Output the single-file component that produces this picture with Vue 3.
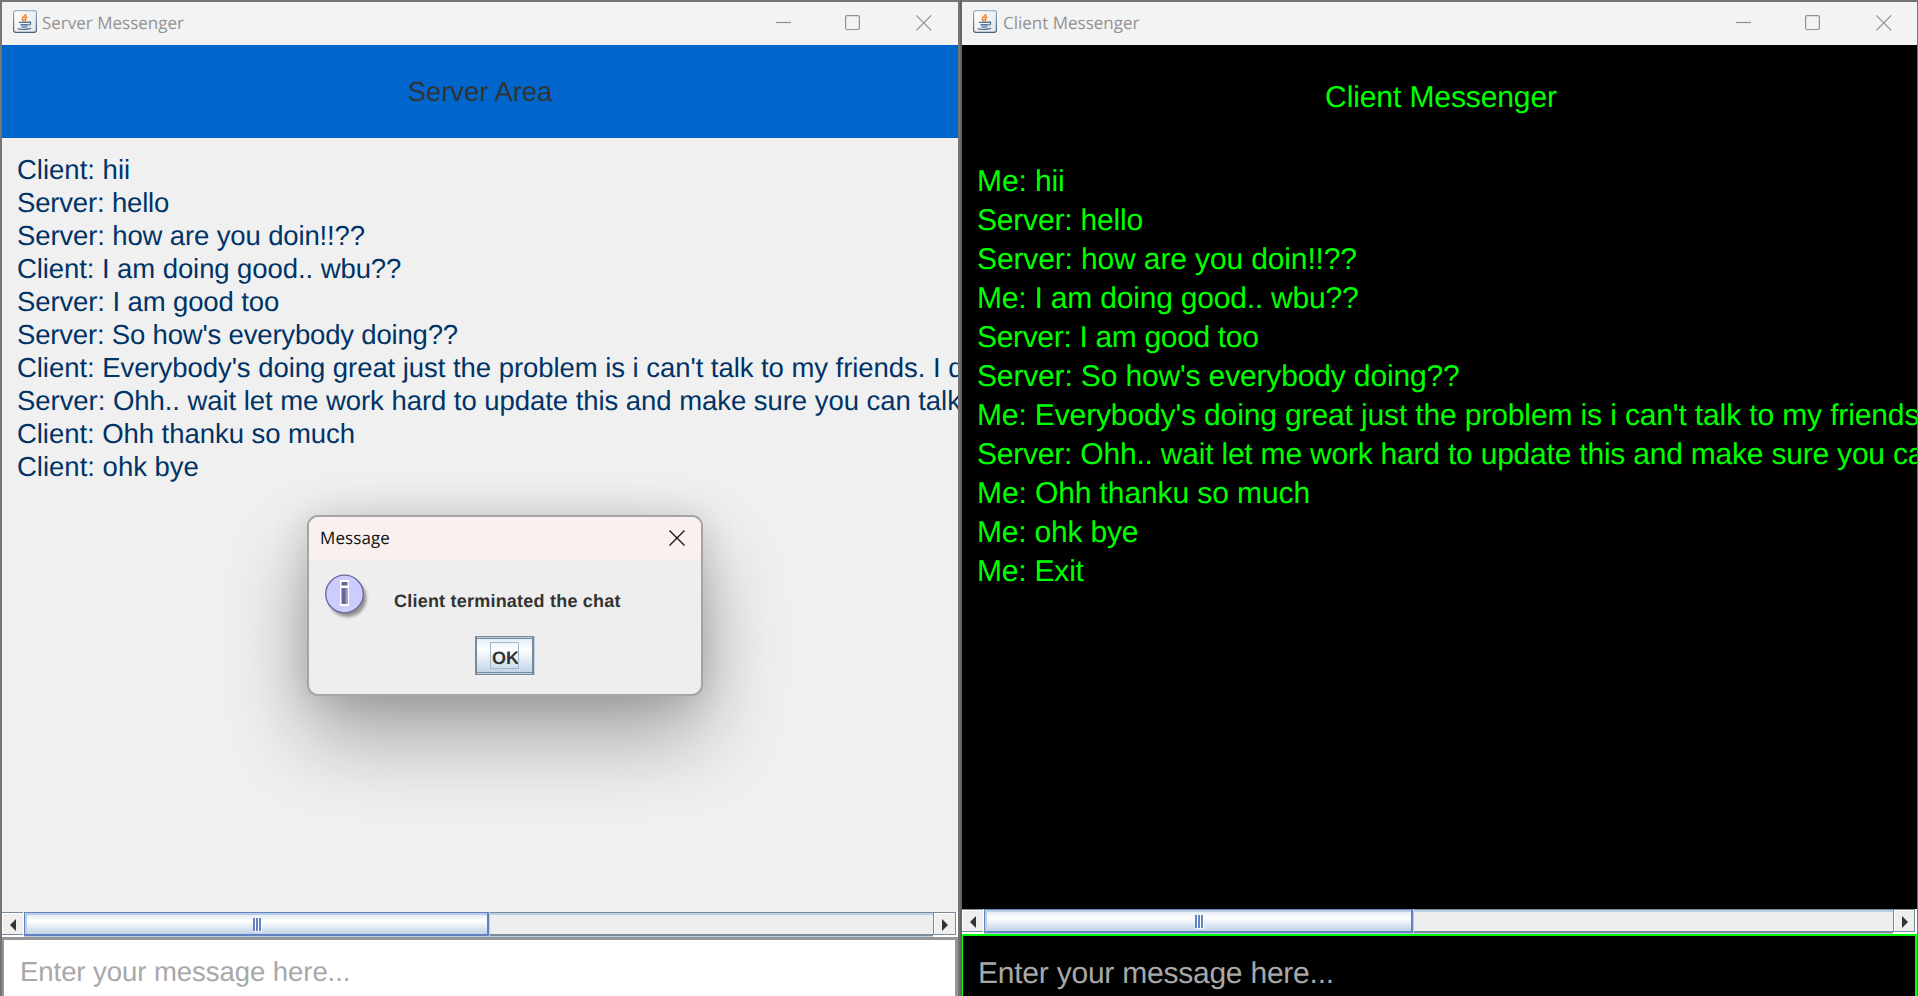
<script setup>
// Each line carries its text and its tracking in pixels.
const panes = [
  {
    id: 'server',
    title: 'Server Messenger',
    heading: 'Server Area',
    lines: [
      ['Client: hii', 0],
      ['Server: hello', -0.17],
      ['Server: how are you doin!!??', -0.13],
      ['Client: I am doing good.. wbu??', -0.08],
      ['Server: I am good too', -0.11],
      ["Server: So how's everybody doing??", -0.18],
      ["Client: Everybody's doing great just the problem is i can't talk to my friends. I d", -0.05],
      ['Server: Ohh.. wait let me work hard to update this and make sure you can talk', -0.05],
      ['Client: Ohh thanku so much', -0.05],
      ['Client: ohk bye', 0],
    ],
  },
  {
    id: 'client',
    title: 'Client Messenger',
    heading: 'Client Messenger',
    lines: [
      ['Me: hii', -0.1],
      ['Server: hello', -0.19],
      ['Server: how are you doin!!??', -0.13],
      ['Me: I am doing good.. wbu??', -0.2],
      ['Server: I am good too', -0.33],
      ["Server: So how's everybody doing??", -0.15],
      ["Me: Everybody's doing great just the problem is i can't talk to my friends", -0.13],
      ['Server: Ohh.. wait let me work hard to update this and make sure you ca', -0.21],
      ['Me: Ohh thanku so much', -0.1],
      ['Me: ohk bye', -0.2],
      ['Me: Exit', -0.2],
    ],
  },
]
</script>

<template>
  <div class="desktop">
    <section v-for="p in panes" :key="p.id" class="window" :class="p.id">
      <header class="titlebar">
        <svg class="java" width="24" height="23" viewBox="0 0 24 23">
          <defs>
            <linearGradient :id="'jb' + p.id" x1="0" y1="0" x2="0" y2="1">
              <stop offset="0" stop-color="#9db4c8" />
              <stop offset="1" stop-color="#3f6280" />
            </linearGradient>
            <linearGradient :id="'jf' + p.id" x1="0" y1="0" x2="1" y2="1">
              <stop offset="0" stop-color="#ffffff" />
              <stop offset="1" stop-color="#e4e4e6" />
            </linearGradient>
          </defs>
          <rect x=".6" y=".6" width="22.8" height="21.8" rx="2.4" :fill="`url(#jf${p.id})`" :stroke="`url(#jb${p.id})`" stroke-width="1.2" />
          <path d="M12.800 4c.8 2-3.800 2.700-3.500 4.800.1 1.100 1.300 1.600 1.500 2.800M14.400 6.800c-2 .7-2.900 1.900-2 2.900.6.700.2 1.300-.4 1.900" fill="none" stroke="#ee8224" stroke-width="1.700" />
          <path d="M6 12.400h9.500M7.500 14.700h7.500M8.300 16.900h6M15.300 12.200c3-.8 3.200 2.200.2 3.100" fill="none" stroke="#4d7399" stroke-width="1.400" />
          <path d="M4.800 18.300c-.6 1.300 11 1.500 13-.3" fill="none" stroke="#4d7399" stroke-width="1.300" />
        </svg>
        <span class="title">{{ p.title }}</span>
        <svg class="controls" width="146" height="16" viewBox="0 0 146 16">
          <path d="M0 7.500h15" />
          <rect x="69.600" y=".7" width="13.800" height="13.800" rx="1.500" />
          <path d="M140.300 .3l15 15M155.300 .3l-15 15" />
        </svg>
      </header>
      <div class="heading">{{ p.heading }}</div>
      <div class="chat">
        <div v-for="([text, track], i) in p.lines" :key="i" class="line" :style="{ letterSpacing: track + 'px' }">{{ text }}</div>
      </div>
      <div class="scrollbar">
        <div class="arrow back">
          <svg width="6" height="12" viewBox="0 0 6 12"><path d="M6 0v12L0 6z" fill="#333" /></svg>
        </div>
        <div class="thumb"><span class="grip"><i></i><i></i><i></i></span></div>
        <div class="track"></div>
        <div class="arrow next">
          <svg width="6" height="12" viewBox="0 0 6 12"><path d="M0 0v12l6-6z" fill="#333" /></svg>
        </div>
      </div>
      <div class="entry">Enter your message here...</div>
    </section>

    <div class="dialog">
      <div class="dialog-title">
        <span>Message</span>
        <svg width="16" height="16" viewBox="0 0 16 16"><path d="M.5 .5l15 15M15.500 .5l-15 15" stroke="#111" stroke-width="1.300" /></svg>
      </div>
      <div class="dialog-main">
        <svg class="info" width="48" height="50" viewBox="0 0 48 50">
          <defs>
            <filter id="soft" x="-20%" y="-20%" width="140%" height="140%"><feGaussianBlur stdDeviation="1.800" /></filter>
          </defs>
          <circle cx="22.500" cy="24" r="19" fill="#000" opacity=".38" filter="url(#soft)" />
          <circle cx="19.500" cy="20" r="18.800" fill="#ccccff" stroke="#666699" stroke-width="1.300" />
          <path d="M15 6h9v26h-9z" fill="#fff" />
          <path d="M16.500 8h6v3.500h-6zM16.500 14h6v16h-6z" fill="#666699" />
          <path d="M20.500 14h2v16h-2z" fill="#9999c4" />
        </svg>
        <span class="notice">Client terminated the chat</span>
      </div>
      <div class="button"><span>OK</span></div>
    </div>
  </div>
</template>

<style>
body { margin: 0; overflow: hidden; background: #747474; }
</style>

<style scoped>
.desktop {
  position: relative;
  box-sizing: border-box;
  width: 1918px;
  height: 996px;
  padding: 2px 1px 0 2px;
  display: grid;
  grid-template-columns: 956px 955px;
  column-gap: 4px;
  background: linear-gradient(90deg, #747474 960px, #656565 960px 962px, #747474 962px);
  overflow: hidden;
  font-family: "Liberation Sans", Arial, sans-serif;
  text-rendering: geometricPrecision;
}
.window {
  display: flex;
  flex-direction: column;
  height: 994px;
  overflow: hidden;
  background: #f0f0f0;
  min-width: 0;
}
.titlebar {
  flex: none;
  height: 43px;
  display: flex;
  align-items: flex-start;
  background: #f3f3f3;
}
.java { margin: 8px 0 0 11px; }
.title {
  margin: 8px 0 0 5px;
  font: 17px/26px "Open Sans", "Noto Sans", sans-serif;
  letter-spacing: 0;
  color: #929292;
  white-space: nowrap;
}
.client .title { margin-left: 6px; }
.controls { margin: 13px 36px 0 auto; overflow: visible; }
.client .controls { margin-right: 35px; }
.controls path, .controls rect { fill: none; stroke: #919191; stroke-width: 1.2; }
.heading {
  flex: none;
  display: flex;
  justify-content: center;
  white-space: nowrap;
}
.server .heading { height: 93px; background: #0066cc; color: #333; font-size: 27.5px; line-height: 94px; letter-spacing: -0.05px; }
.client .heading { height: 101px; box-sizing: border-box; padding-left: 3px; background: #000; color: #0f0; font-size: 30px; line-height: 105px; letter-spacing: -0.1px; }
.chat { flex: none; box-sizing: border-box; padding-left: 15px; overflow: hidden; white-space: nowrap; }
.server .chat { height: 774px; padding-top: 15px; color: #003366; font-size: 27.5px; line-height: 33px; }
.client .chat { height: 763px; padding-top: 16px; background: #000; color: #0f0; font-size: 30px; line-height: 39px; }

.scrollbar { flex: none; height: 25px; display: flex; background: #fff; }
.arrow {
  box-sizing: border-box;
  height: 23px;
  border-top: 1px solid #7a8a99;
  border-bottom: 1px solid #7a8a99;
  background: #eee;
  box-shadow: inset 2px 2px 0 -1px #fff;
  display: flex;
  align-items: center;
}
.arrow.back { width: 21px; margin-right: 1px; padding-left: 8px; }
.arrow.next { width: 23px; margin-right: 2px; border-left: 1px solid #7a8a99; border-right: 1px solid #7a8a99; padding-left: 8px; }
.client .arrow.next { width: 22px; }
.arrow svg { margin-top: 3px; }
.thumb {
  box-sizing: border-box;
  height: 24px;
  border: 1px solid #6382bf;
  border-right-width: 2px;
  border-bottom-width: 2px;
  background: linear-gradient(#dbe6f2, #ffffff 38%, #c0d3e7);
  box-shadow: inset 2px 2px 0 #b8cfe5, 0 1px 0 #b8cfe5, 1px 0 0 #b8cfe5;
  z-index: 1;
}
.server .thumb { width: 465px; padding: 5px 0 0 228px; }
.client .thumb { width: 429px; padding: 5px 0 0 210px; }
.grip { display: flex; gap: 1px; }
.grip i { width: 2px; height: 13px; background: #6382bf; box-shadow: 1px 1px 0 #fff; }
.track {
  flex: 1;
  box-sizing: border-box;
  height: 24px;
  border-top: 1px solid #7a8a99;
  border-bottom: 2px solid #7a8a99;
  background: #eee;
  box-shadow: inset 0 2px 0 #b8cfe5, 0 1px 0 #b8cfe5;
}
.entry { flex: 1; box-sizing: border-box; white-space: nowrap; color: #a8a8a8; }
.server .entry { border: 3px solid #969696; border-left-width: 2px; border-bottom: 0; background: #fff; padding: 15px 0 0 16px; font-size: 27.5px; line-height: 33px; letter-spacing: -0.05px; }
.client .entry { border: 2px solid #0f0; border-left-width: 1px; border-bottom: 0; background: #000; padding: 18px 0 0 15px; font-size: 30px; line-height: 39px; letter-spacing: -0.23px; }

.dialog {
  position: absolute;
  left: 307px;
  top: 515px;
  box-sizing: border-box;
  width: 396px;
  height: 181px;
  border: 2px solid #a5a5a5;
  border-radius: 11px;
  background: #eee;
  box-shadow: 0 40px 84px rgba(0, 0, 0, 0.33), 0 2px 36px rgba(0, 0, 0, 0.13);
  background-clip: padding-box;
}
.dialog-title {
  height: 43px;
  display: flex;
  justify-content: space-between;
  padding: 0 16.5px 0 11px;
  border-radius: 9px 9px 0 0;
  background: #f9f0ef;
  font: 17px/42px "Open Sans", "Noto Sans", sans-serif;
  letter-spacing: 0.1px;
  color: #111;
}
.dialog-title svg { margin-top: 13px; }
.dialog-main { display: flex; height: 76px; }
.info { margin: 14px 0 0 16px; overflow: visible; }
.notice { margin: 30px 0 0 21px; font-size: 18px; line-height: 22px; font-weight: bold; letter-spacing: 0.22px; color: #333; white-space: nowrap; }
.button {
  box-sizing: border-box;
  width: 59px;
  height: 39px;
  margin-left: 166px;
  border: 1px solid #7a8a99;
  border-right-width: 2px;
  padding: 5px 0 0 14px;
  background: linear-gradient(#7a8a99 0 1px, transparent 1px) 0 1px / 100% 35px no-repeat, linear-gradient(#dfe9f3, #ffffff 34%, #bcd0e4);
  box-shadow: inset 1px 0 0 #7a8a99, inset 0 1px 0 #b8cfe5, inset 0 -1px 0 #b8cfe5, inset 0 -2px 0 #7a8a99, 1px 0 0 #b8cfe5;
}
.button span {
  box-sizing: border-box;
  display: block;
  width: 29px;
  height: 27px;
  border: 1px solid #a3b8cc;
  padding-left: 1px;
  overflow: hidden;
  font-size: 18px;
  line-height: 30px;
  font-weight: bold;
  color: #333;
}
</style>
